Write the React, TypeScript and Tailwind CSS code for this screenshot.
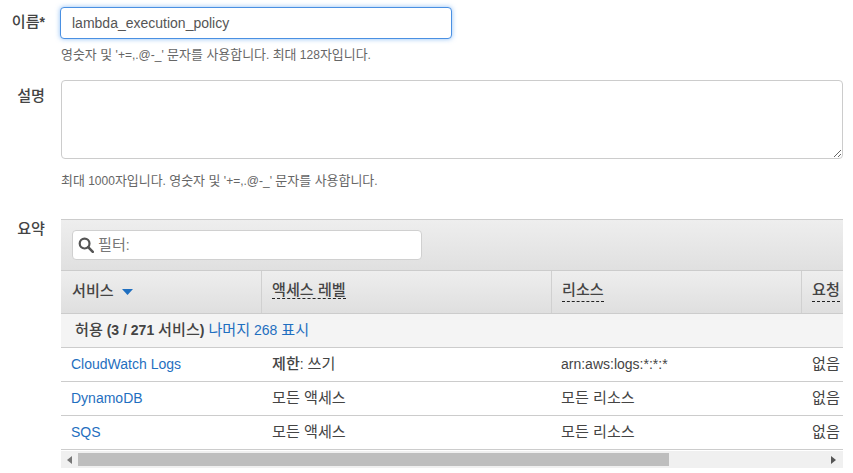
import React from "react";

const cols = "grid grid-cols-[200px_290px_250px_42px]";

function K({ children, b }: { children: React.ReactNode; b?: boolean }) {
  return <span className={`text-[1.08em] ${b ? "font-medium" : "font-normal"}`}>{children}</span>;
}

function Th({ children, first }: { children: React.ReactNode; first?: boolean }) {
  return (
    <div className={`h-[42px] pt-[9px] overflow-hidden whitespace-nowrap ${first ? "pl-[11px]" : "pl-[10px] border-l border-[#d0d0d0]"}`}>
      {children}
    </div>
  );
}

function Dashed({ children, short }: { children: React.ReactNode; short?: boolean }) {
  return (
    <span className={`inline-block leading-[20px] border-b border-dashed border-[#222] ${short ? "h-[19px]" : "h-[22px]"}`}>
      {children}
    </span>
  );
}

function Row({ service, level, resource }: { service: string; level: React.ReactNode; resource: React.ReactNode }) {
  return (
    <div className={`${cols} h-[34px] border-b border-[#cccccc] items-center text-[14px] text-[#444] whitespace-nowrap`}>
      <a className="pl-[10px] text-[#1f6fc0]">{service}</a>
      <div className="pl-[11px]">{level}</div>
      <div className="pl-[10px]">{resource}</div>
      <div className="pl-[11px] overflow-hidden"><K>없음</K></div>
    </div>
  );
}

export default function App() {
  return (
    <div className="w-[853px] h-[473px] overflow-hidden bg-white text-[#444] font-['Liberation_Sans','Noto_Sans_CJK_KR',sans-serif] text-[14px]">
      <div className="flex pt-[7px]">
        <div className="w-[46px] text-right font-bold pt-[5px] leading-[20px] whitespace-nowrap ml-[-1px] mr-[15px]">
          <K b>이름</K>*
        </div>
        <div className="flex flex-col">
          <input
            readOnly
            value="lambda_execution_policy"
            className="w-[392px] h-[32px] rounded-[4px] border border-[#4a90e2] shadow-[0_0_5px_rgba(70,150,240,0.6)] px-[11px] outline-none text-[14px] text-[#555] bg-white"
          />
          <div className="mt-[8px] text-[12px] leading-[16px] text-[#666] whitespace-nowrap pl-px">
            <K>영숫자 및</K> '+=,.@-_' <K>문자를 사용합니다</K>. <K>최대</K> 128<K>자입니다</K>.
          </div>
        </div>
      </div>

      <div className="flex mt-[17px]">
        <div className="w-[45px] text-right font-bold pt-[6px] leading-[20px] mr-[16px]"><K b>설명</K></div>
        <div className="flex flex-col">
          <textarea
            readOnly
            className="block w-[782px] h-[79px] rounded-[4px] border border-[#cccccc] outline-none bg-white resize-y"
          />
          <div className="mt-[14px] text-[12px] leading-[16px] text-[#666] whitespace-nowrap">
            <K>최대</K> 1000<K>자입니다</K>. <K>영숫자 및</K> '+=,.@-_' <K>문자를 사용합니다</K>.
          </div>
        </div>
      </div>

      <div className="flex mt-[30px]">
        <div className="w-[45px] text-right font-bold leading-[20px] mr-[16px]"><K b>요약</K></div>
        <div className="w-[782px] overflow-hidden">
          <div className="h-[52px] bg-gradient-to-b from-[#eeeeee] to-[#e0e0e0] border-y border-[#cccccc] pl-[11px] pt-[10px]">
            <div className="w-[350px] h-[30px] bg-white rounded-[4px] border border-[#d0d0d0] flex items-center pl-[5px] gap-[4px]">
              <svg width="16" height="16" viewBox="0 0 16 16" fill="none" stroke="#555" strokeWidth="2.2" className="shrink-0">
                <circle cx="6.6" cy="6.6" r="4.9" />
                <path d="M10.2 10.2 L14.8 14.8" strokeLinecap="round" strokeWidth="2.6" />
              </svg>
              <span className="text-[#777] text-[14px] leading-none"><K>필터</K>:</span>
            </div>
          </div>

          <div className={`${cols} bg-gradient-to-b from-[#eeeeee] to-[#dfdfdf] border-b border-[#cccccc] font-bold text-[14px] text-[#444]`}>
            <Th first>
              <span className="inline-flex items-center h-[22px] gap-[8px]">
                <K b>서비스</K>
                <svg width="11" height="6" viewBox="0 0 11 6" className="mt-[2px]"><path d="M0 0 H11 L5.5 6 Z" fill="#1f6fc0" /></svg>
              </span>
            </Th>
            <Th><Dashed short><K b>액세스 레벨</K></Dashed></Th>
            <Th><Dashed><K b>리소스</K></Dashed></Th>
            <Th><Dashed><K b>요청</K></Dashed></Th>
          </div>

          <div className="h-[34px] bg-[#f4f4f4] border-b border-[#cccccc] flex items-center pl-[14px] whitespace-nowrap">
            <span className="font-bold"><K b>허용</K> (3 / 271 <K b>서비스</K>)</span>
            <a className="ml-[4px] text-[#1f6fc0]"><K>나머지</K> 268 <K>표시</K></a>
          </div>

          <Row service="CloudWatch Logs" level={<><b><K b>제한</K></b>: <K>쓰기</K></>} resource="arn:aws:logs:*:*:*" />
          <Row service="DynamoDB" level={<K>모든 액세스</K>} resource={<K>모든 리소스</K>} />
          <Row service="SQS" level={<K>모든 액세스</K>} resource={<K>모든 리소스</K>} />

          <div className="mt-px h-[17px] bg-[#f0f0f0] flex items-center">
            <div className="w-[17px] flex justify-center">
              <svg width="5" height="8" viewBox="0 0 5 8"><path d="M5 0 V8 L0 4 Z" fill="#777" /></svg>
            </div>
            <div className="w-[591px] h-[13px] bg-[#bebebe]" />
            <div className="flex-1 flex justify-end pr-[7px]">
              <svg width="5" height="8" viewBox="0 0 5 8"><path d="M0 0 V8 L5 4 Z" fill="#555" /></svg>
            </div>
          </div>
        </div>
      </div>
    </div>
  );
}
